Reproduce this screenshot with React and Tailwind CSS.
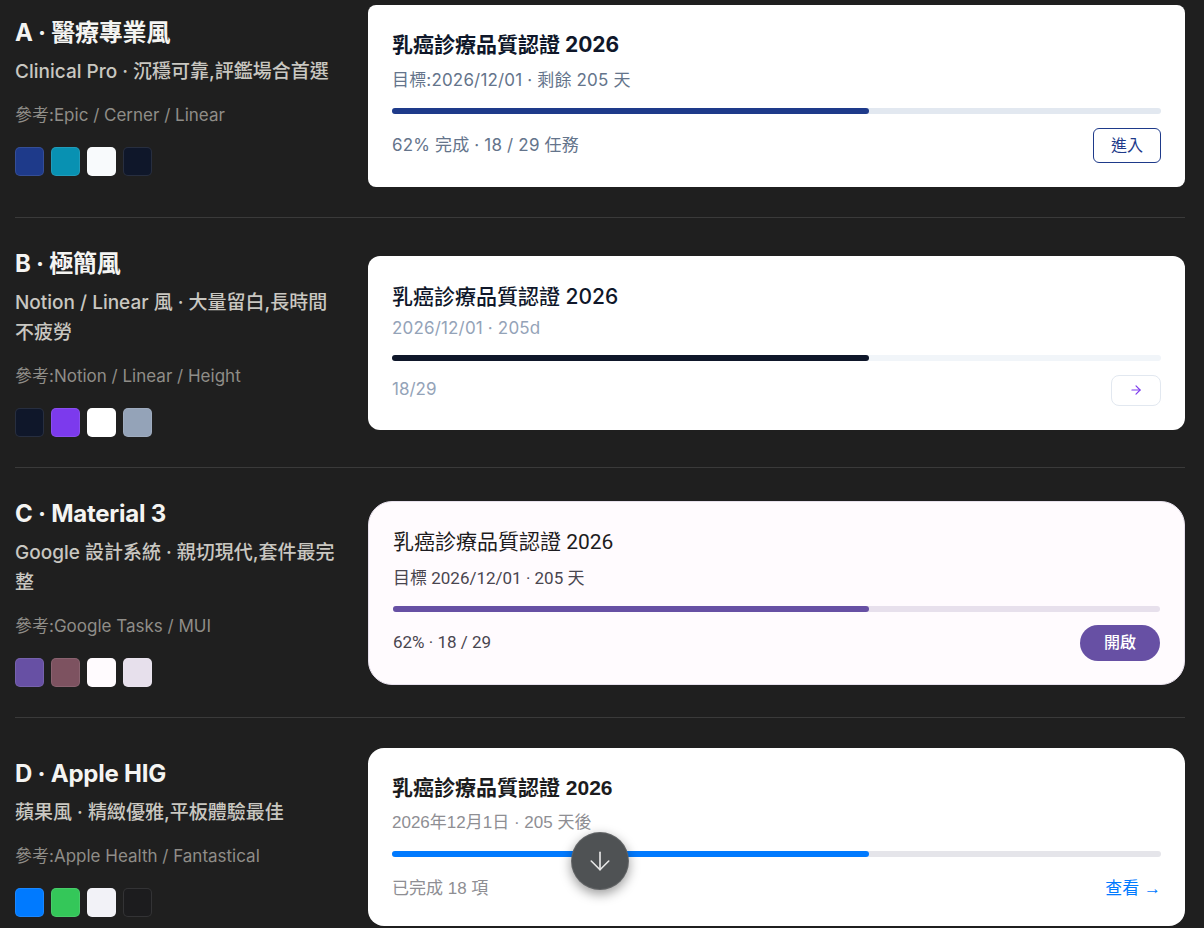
import { ArrowRight, ArrowDown } from "lucide-react";

const styles = [
	{
		key: "A",
		title: "A · 醫療專業風",
		desc: "Clinical Pro · 沉穩可靠,評鑑場合首選",
		refs: "參考:Epic / Cerner / Linear",
		swatches: ["bg-[#1e3a8a]", "bg-[#0891b2]", "bg-[#f8fafc]", "bg-[#0f172a]"],
	},
	{
		key: "B",
		title: "B · 極簡風",
		desc: "Notion / Linear 風 · 大量留白,長時間不疲勞",
		refs: "參考:Notion / Linear / Height",
		swatches: ["bg-[#0f172a]", "bg-[#7c3aed]", "bg-[#ffffff]", "bg-[#94a3b8]"],
	},
	{
		key: "C",
		title: "C · Material 3",
		desc: "Google 設計系統 · 親切現代,套件最完整",
		refs: "參考:Google Tasks / MUI",
		swatches: ["bg-[#6750a4]", "bg-[#7d5260]", "bg-[#fffbfe]", "bg-[#e7e0ec]"],
	},
	{
		key: "D",
		title: "D · Apple HIG",
		desc: "蘋果風 · 精緻優雅,平板體驗最佳",
		refs: "參考:Apple Health / Fantastical",
		swatches: ["bg-[#007aff]", "bg-[#34c759]", "bg-[#f2f2f7]", "bg-[#1c1c1e]"],
	},
];

const PCT = 62;

const Bar = ({ track, fill, mt = "mt-[15px]" }) => (
	<div className={`${mt} h-[6px] w-full rounded-full ${track}`}>
		<div className={`h-full rounded-full ${fill}`} style={{ width: `${PCT}%` }} />
	</div>
);

const CardA = () => (
	<div className="rounded-lg bg-white px-6 pt-[25px] pb-6 font-['Inter','Noto_Sans_CJK_TC',sans-serif]">
		<h3 className="text-[21px] leading-[30px] font-bold text-[#0f172a]">乳癌診療品質認證 2026</h3>
		<p className="mt-[7px] text-[17px] leading-[26px] tracking-[0.01em] text-[#64748b]">目標:2026/12/01 · 剩餘 205 天</p>
		<Bar track="bg-[#e2e8f0]" fill="bg-[#1e3a8a]" />
		<div className="mt-[14px] flex items-center justify-between">
			<span className="text-[17px] tracking-[0.01em] text-[#64748b]">62% 完成 · 18 / 29 任務</span>
			<button className="rounded-md border border-[#1e3a8a] px-[17px] py-[6px] text-[16px] leading-[21px] text-[#1e3a8a]">
				進入
			</button>
		</div>
	</div>
);

const CardB = () => (
	<div className="rounded-xl bg-white px-6 pt-[26px] pb-6 font-['Inter','Noto_Sans_CJK_TC',sans-serif]">
		<h3 className="text-[21px] leading-[30px] font-medium text-[#0f172a]">乳癌診療品質認證 2026</h3>
		<p className="mt-[3px] text-[17px] leading-[26px] tracking-[0.01em] text-[#94a3b8]">2026/12/01 · 205d</p>
		<Bar track="bg-[#f1f5f9]" fill="bg-[#0f172a]" mt="mt-[14px]" />
		<div className="mt-[14px] flex items-center justify-between">
			<span className="text-[17px] text-[#94a3b8]">18/29</span>
			<button className="flex h-[31px] w-[50px] items-center justify-center rounded-lg border border-[#e2e8f0] text-[#7c3aed]">
				<ArrowRight size={14} strokeWidth={2} />
			</button>
		</div>
	</div>
);

const CardC = () => (
	<div className="rounded-[24px] border border-[#e7e0ec] bg-[#fffbfe] px-6 pt-[25px] pb-[23px] font-['Roboto','Noto_Sans_CJK_TC',sans-serif]">
		<h3 className="text-[21px] leading-[30px] text-[#1d1b20]">乳癌診療品質認證 2026</h3>
		<p className="mt-[8px] text-[17px] leading-[26px] text-[#49454f]">目標 2026/12/01 · 205 天</p>
		<Bar track="bg-[#e7e0ec]" fill="bg-[#6750a4]" />
		<div className="mt-[13px] flex items-center justify-between">
			<span className="text-[17px] text-[#49454f]">62% · 18 / 29</span>
			<button className="rounded-full bg-[#6750a4] px-6 py-2 text-[16px] leading-5 font-medium text-white">
				開啟
			</button>
		</div>
	</div>
);

const CardD = () => (
	<div className="rounded-2xl bg-white px-6 pt-[25px] pb-[22px] font-['Liberation_Sans','Noto_Sans_CJK_TC',sans-serif]">
		<h3 className="text-[21px] leading-[30px] font-bold text-[#1c1c1e]">乳癌診療品質認證 2026</h3>
		<p className="mt-[7px] text-[17px] leading-[26px] text-[#8e8e93]">2026年12月1日 · 205 天後</p>
		<Bar track="bg-[#e5e5ea]" fill="bg-[#007aff]" />
		<div className="mt-[17px] flex h-[30px] items-center justify-between">
			<span className="text-[17px] text-[#8e8e93]">已完成 18 項</span>
			<span className="text-[17px] text-[#007aff]">查看 →</span>
		</div>
	</div>
);

const cards = { A: CardA, B: CardB, C: CardC, D: CardD };

const App = () => {
	return (
		<div className="min-h-screen overflow-hidden bg-[#1f1f1f] pl-[15px] pr-[19px] font-['Inter','Noto_Sans_CJK_TC',sans-serif]">
			<div className="-mt-[25px]">
				{styles.map((s, i) => {
					const Card = cards[s.key];
					return (
						<div
							key={s.key}
							className={`flex items-center gap-7 py-[30px] ${i < styles.length - 1 ? "border-b border-[#3a3a3a]" : ""}`}>
							<div className="w-[325px] shrink-0">
								<h2 className="text-[24px] leading-[32px] font-bold tracking-[-0.01em] text-[#f4f4f2]">{s.title}</h2>
								<p className="mt-2 text-[19px] leading-[30px] font-medium text-[#c9c7c1]">{s.desc}</p>
								<p className="mt-4 text-[17px] leading-6 text-[#8f8d88]">{s.refs}</p>
								<div className="mt-5 flex gap-[7px]">
									{s.swatches.map((c) => (
										<span key={c} className={`h-[29px] w-[29px] rounded-[5px] border border-white/10 ${c}`} />
									))}
								</div>
							</div>
							<div className="flex-1">
								<Card />
							</div>
						</div>
					);
				})}
			</div>

			<button className="fixed bottom-[38px] left-[571px] flex h-[58px] w-[58px] items-center justify-center rounded-full border border-white/10 bg-[#4f5254] text-[#e8e8e8] shadow-[0_4px_12px_rgba(0,0,0,0.4)]">
				<ArrowDown size={30} strokeWidth={1.3} />
			</button>
		</div>
	);
};

export default App;
